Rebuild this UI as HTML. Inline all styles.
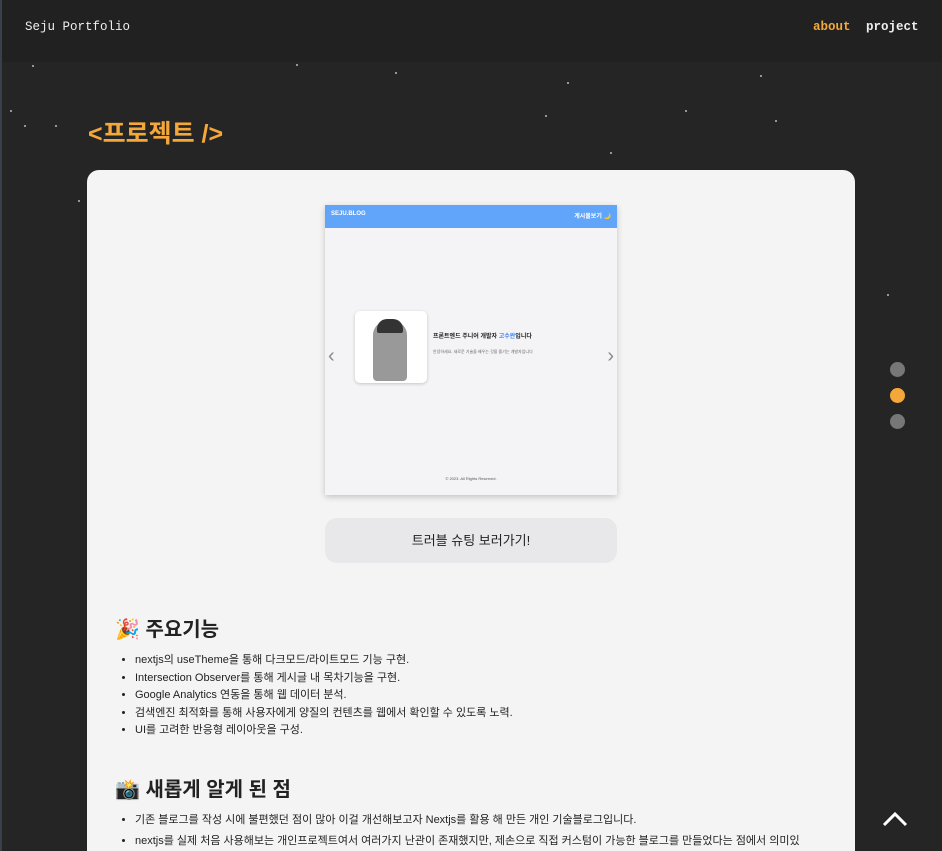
<!DOCTYPE html>
<html><head><meta charset="utf-8"><style>
*{margin:0;padding:0;box-sizing:border-box}
html,body{width:942px;height:851px;overflow:hidden}
body{background:#252525;font-family:"Liberation Sans","Noto Sans CJK KR",sans-serif;position:relative}
.edge{position:absolute;left:0;top:0;width:2px;height:851px;background:#3a3f4a;z-index:5}
.hdr{position:absolute;left:0;top:0;width:942px;height:62px;background:#212121;font-family:"Liberation Mono","Noto Sans CJK KR",monospace;font-size:12.5px;color:#eee}
.hdr .l{position:absolute;left:25px;top:20px}
.hdr .a{position:absolute;left:813px;top:20px;color:#f5a83a;font-weight:bold}
.hdr .p{position:absolute;left:866px;top:20px;font-weight:bold}
.star{position:absolute;width:2px;height:2px;background:#bbb;border-radius:1px}
h1{position:absolute;left:88px;top:114px;color:#f5a83a;font-size:25px;font-weight:bold}
.card{position:absolute;left:87px;top:170px;width:768px;height:700px;background:#f4f4f4;border-radius:12px}
.shot{position:absolute;left:238px;top:35px;width:292px;height:290px;background:#f4f4f6;box-shadow:0 2px 6px rgba(0,0,0,.2)}
.shot .bar{height:23px;background:#60a5fa;color:#fff;font-size:6px;font-weight:bold;padding:6px 6px}
.btn{position:absolute;left:238px;top:348px;width:292px;height:45px;background:#e8e8ea;border-radius:12px;text-align:center;line-height:45px;font-size:13px;color:#222}
h2{position:absolute;left:28px;font-size:20px;font-weight:bold;color:#222}
ul{position:absolute;left:48px;font-size:11px;color:#222;line-height:17.5px}
.dot{position:absolute;left:890px;width:15px;height:15px;border-radius:50%;background:#777}
</style></head><body>
<div class="edge"></div>
<div class="hdr"><span class="l">Seju Portfolio</span><span class="a">about</span><span class="p">project</span></div>
<div class="star" style="left:32px;top:65px"></div><div class="star" style="left:296px;top:64px"></div><div class="star" style="left:395px;top:72px"></div><div class="star" style="left:567px;top:82px"></div><div class="star" style="left:760px;top:75px"></div><div class="star" style="left:685px;top:110px"></div><div class="star" style="left:24px;top:125px"></div><div class="star" style="left:55px;top:125px"></div><div class="star" style="left:545px;top:115px"></div><div class="star" style="left:775px;top:120px"></div><div class="star" style="left:610px;top:152px"></div><div class="star" style="left:78px;top:200px"></div><div class="star" style="left:887px;top:294px"></div><div class="star" style="left:10px;top:110px"></div>
<h1>&lt;프로젝트 /&gt;</h1>
<div class="card">
<div class="shot"><div class="bar">SEJU.BLOG <span style="float:right">게시물보기 🌙</span></div>
<div style="position:absolute;left:30px;top:106px;width:72px;height:72px;background:#fff;border-radius:5px;box-shadow:0 1px 3px rgba(0,0,0,.2)"><div style="position:absolute;left:18px;top:10px;width:34px;height:60px;background:#999;border-radius:14px 14px 4px 4px"></div><div style="position:absolute;left:22px;top:8px;width:26px;height:14px;background:#333;border-radius:10px 10px 2px 2px"></div></div>
<div style="position:absolute;left:108px;top:126px;font-size:6px;font-weight:bold;color:#222">프론트엔드 주니어 개발자 <span style="color:#3b82f6">고수완</span>입니다</div>
<div style="position:absolute;left:108px;top:144px;font-size:4px;color:#666">안녕하세요, 새로운 기술을 배우는 것을 즐기는 개발자입니다</div>
<div style="position:absolute;left:3px;top:140px;font-size:20px;color:#888">‹</div><div style="position:absolute;right:3px;top:140px;font-size:20px;color:#888">›</div>
<div style="position:absolute;left:0;width:100%;top:271px;text-align:center;font-size:4px;color:#555">© 2023. All Rights Reserved.</div>
</div>
<div class="btn">트러블 슈팅 보러가기!</div>
<h2 style="top:443px">🎉 주요기능</h2>
<ul style="top:482px"><li>nextjs의 useTheme을 통해 다크모드/라이트모드 기능 구현.</li><li>Intersection Observer를 통해 게시글 내 목차기능을 구현.</li><li>Google Analytics 연동을 통해 웹 데이터 분석.</li><li>검색엔진 최적화를 통해 사용자에게 양질의 컨텐츠를 웹에서 확인할 수 있도록 노력.</li><li>UI를 고려한 반응형 레이아웃을 구성.</li></ul>
<h2 style="top:603px">📸 새롭게 알게 된 점</h2>
<ul style="top:640px;line-height:21px"><li>기존 블로그를 작성 시에 불편했던 점이 많아 이걸 개선해보고자 Nextjs를 활용 해 만든 개인 기술블로그입니다.</li><li>nextjs를 실제 처음 사용해보는 개인프로젝트여서 여러가지 난관이 존재했지만, 제손으로 직접 커스텀이 가능한 블로그를 만들었다는 점에서 의미있</li></ul>
</div>
<div class="dot" style="top:362px"></div><div class="dot" style="top:388px;background:#f5a83a"></div><div class="dot" style="top:414px"></div>
<svg style="position:absolute;left:882px;top:810px" width="26" height="18"><path d="M2 15 L13 4 L24 15" stroke="#fff" stroke-width="3" fill="none"/></svg>
</body></html>
